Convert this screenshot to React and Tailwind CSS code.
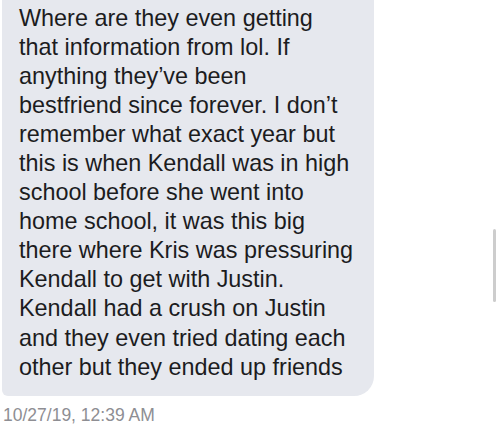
import React from 'react'

const lines = [
  'Where are they even getting',
  'that information from lol. If',
  'anything they\u2019ve been',
  'bestfriend since forever. I don\u2019t',
  'remember what exact year but',
  'this is when Kendall was in high',
  'school before she went into',
  'home school, it was this big',
  'there where Kris was pressuring',
  'Kendall to get with Justin.',
  'Kendall had a crush on Justin',
  'and they even tried dating each',
  'other but they ended up friends',
]

export default function App() {
  return (
    <div className="relative w-[500px] h-[431px] bg-white overflow-hidden" style={{ fontFamily: '"Liberation Sans", Arial, sans-serif' }}>
      <div className="ml-[2px] -mt-[20px] w-[372px] bg-[#e6e8ee] rounded-tr-[20px] rounded-br-[20px] rounded-bl-[6px] pl-[17px] pr-2 pt-[23.5px] pb-[14px]">
        {lines.map((l) => (
          <div key={l} className="text-[23.4px] leading-[29.1px] text-[#1c1c1e] whitespace-nowrap">
            {l}
          </div>
        ))}
      </div>
      <div className="mt-[9px] ml-[3px] text-[17.5px] leading-[20px] text-[#8e8e93]">10/27/19, 12:39 AM</div>
      <div className="absolute left-[493px] top-[229px] w-[3px] h-[73px] rounded-full bg-[#cdcdcd]" />
    </div>
  )
}
